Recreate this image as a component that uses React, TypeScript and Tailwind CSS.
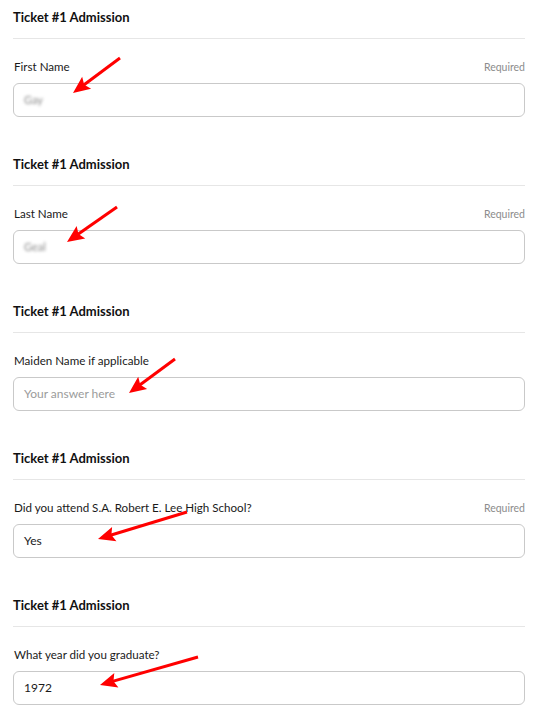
import React from "react";

type Field = {
  label: string;
  required?: boolean;
  value?: string;
  placeholder?: string;
  blurred?: boolean;
};

const fields: Field[] = [
  { label: "First Name", required: true, value: "Gay", blurred: true },
  { label: "Last Name", required: true, value: "Geal", blurred: true },
  { label: "Maiden Name if applicable", placeholder: "Your answer here" },
  { label: "Did you attend S.A. Robert E. Lee High School?", required: true, value: "Yes" },
  { label: "What year did you graduate?", value: "1972" },
];

// annotation arrows drawn over the screenshot: [tailX, tailY, tipX, tipY]
const arrows: [number, number, number, number][] = [
  [120, 58, 73, 93],
  [117, 207, 67, 242],
  [175, 359, 129, 393],
  [187, 512, 98, 539],
  [198, 657, 100, 685],
];

function Arrow({ a }: { a: [number, number, number, number] }) {
  const [x1, y1, x2, y2] = a;
  const dx = x2 - x1;
  const dy = y2 - y1;
  const len = Math.hypot(dx, dy);
  const ux = dx / len;
  const uy = dy / len;
  const head = 17;
  const half = 7.5;
  const bx = x2 - ux * head;
  const by = y2 - uy * head;
  const pts = [
    `${x2},${y2}`,
    `${bx - uy * half},${by + ux * half}`,
    `${bx + ux * 3},${by + uy * 3}`,
    `${bx + uy * half},${by - ux * half}`,
  ].join(" ");
  return (
    <g>
      <line x1={x1} y1={y1} x2={bx + ux * 4} y2={by + uy * 4} stroke="#ff0000" strokeWidth={3} />
      <polygon points={pts} fill="#ff0000" />
    </g>
  );
}

function Section({ field }: { field: Field }) {
  return (
    <section className="mb-[37px]">
      <h2 className="h-5 text-[13px] leading-5 font-bold text-[#111]">Ticket #1 Admission</h2>
      <div className="mt-[11px] h-px bg-[#e6e6e6]" />
      <div className="mt-[19px] flex h-[18px] items-center justify-between">
        <span className="pl-px text-[11.6px] text-[#1a1a1a]">{field.label}</span>
        {field.required && <span className="pt-0.5 text-[10.5px] text-[#8c8c8c]">Required</span>}
      </div>
      <div className="mt-[7px] flex h-[34px] items-center rounded-[6px] border border-[#c9c9c9] px-[10px] text-[12px]">
        {field.value ? (
          <span className={field.blurred ? "text-[11px] text-[#8a8a8a] blur-[1.4px]" : "text-[#1a1a1a]"}>
            {field.value}
          </span>
        ) : (
          <span className="text-[#9b9b9b]">{field.placeholder}</span>
        )}
      </div>
    </section>
  );
}

export default function App() {
  return (
    <div
      className="relative h-[720px] w-[550px] overflow-hidden bg-white pl-[13px] pr-[25px] pt-[7px]"
      style={{ fontFamily: "Lato, 'Noto Sans', sans-serif" }}
    >
      {fields.map((f, i) => (
        <Section key={i} field={f} />
      ))}
      <svg className="pointer-events-none absolute left-0 top-0" width={550} height={720}>
        {arrows.map((a, i) => (
          <Arrow key={i} a={a} />
        ))}
      </svg>
    </div>
  );
}
